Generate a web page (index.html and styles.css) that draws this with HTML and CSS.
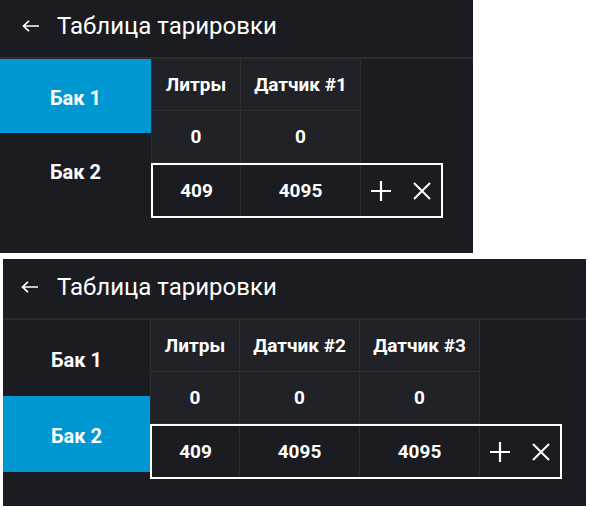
FILE: index.html
```html
<!DOCTYPE html>
<html lang="ru">
<head>
<meta charset="UTF-8">
<meta name="viewport" content="width=device-width, initial-scale=1.0">
<title>Таблица тарировки</title>
<link rel="stylesheet" href="styles.css">
</head>
<body>

<!-- Screen 1: one sensor -->
<div class="screen screen-one">
  <div class="topbar">
    <svg class="back" width="18" height="12" viewBox="0 0 18 12"><path d="M17 6H1.5M7 0.8L1.5 6L7 11.2" fill="none" stroke="#fff" stroke-width="1.7"/></svg>
    <h1>Таблица тарировки</h1>
  </div>
  <div class="content">
    <div class="tanks">
      <div class="tank active">Бак 1</div>
      <div class="tank">Бак 2</div>
    </div>
    <div class="calib">
      <div class="row head">
        <div class="cell c1">Литры</div>
        <div class="cell c2">Датчик #1</div>
      </div>
      <div class="row">
        <div class="cell c1">0</div>
        <div class="cell c2">0</div>
      </div>
      <div class="row edit">
        <div class="cell c1">409</div>
        <div class="cell c2">4095</div>
        <div class="actions">
          <svg width="20" height="20" viewBox="0 0 20 20"><path d="M10 0V20M0 10H20" stroke="#fff" stroke-width="2.2"/></svg>
          <svg width="18" height="18" viewBox="0 0 18 18"><path d="M1 1L17 17M17 1L1 17" stroke="#fff" stroke-width="2"/></svg>
        </div>
      </div>
    </div>
  </div>
</div>

<!-- Screen 2: two sensors -->
<div class="screen screen-two">
  <div class="topbar">
    <svg class="back" width="18" height="12" viewBox="0 0 18 12"><path d="M17 6H1.5M7 0.8L1.5 6L7 11.2" fill="none" stroke="#fff" stroke-width="1.7"/></svg>
    <h1>Таблица тарировки</h1>
  </div>
  <div class="content">
    <div class="tanks">
      <div class="tank">Бак 1</div>
      <div class="tank active">Бак 2</div>
    </div>
    <div class="calib">
      <div class="row head">
        <div class="cell c1">Литры</div>
        <div class="cell c2">Датчик #2</div>
        <div class="cell c2">Датчик #3</div>
      </div>
      <div class="row">
        <div class="cell c1">0</div>
        <div class="cell c2">0</div>
        <div class="cell c2">0</div>
      </div>
      <div class="row edit">
        <div class="cell c1">409</div>
        <div class="cell c2">4095</div>
        <div class="cell c2">4095</div>
        <div class="actions">
          <svg width="20" height="20" viewBox="0 0 20 20"><path d="M10 0V20M0 10H20" stroke="#fff" stroke-width="2.2"/></svg>
          <svg width="18" height="18" viewBox="0 0 18 18"><path d="M1 1L17 17M17 1L1 17" stroke="#fff" stroke-width="2"/></svg>
        </div>
      </div>
    </div>
  </div>
</div>

</body>
</html>
```

FILE: styles.css
```css
body {
  margin: 0;
  background: #fff;
  font-family: Roboto, "Noto Sans", sans-serif;
  color: #fff;
}

.screen {
  background: #1b1c21;
  overflow: hidden;
}
.screen-one {
  width: 473px;
  height: 253px;
}
.screen-two {
  width: 583px;
  height: 247px;
  margin: 6px 0 0 3px;
}

.topbar {
  box-sizing: border-box;
  height: 59px;
  display: flex;
  align-items: center;
  padding: 0 0 5px 22px;
  border-bottom: 2px solid #2b2c31;
}
.screen-two .topbar {
  height: 61px;
  padding: 0 0 4px 18px;
}
.topbar h1 {
  margin: 0 0 0 17px;
  font-size: 24px;
  font-weight: 400;
}
.screen-two .topbar h1 {
  margin-left: 18px;
}

.content {
  display: flex;
}

.tanks {
  width: 151px;
}
.screen-two .tanks {
  width: 147px;
}
.tank {
  box-sizing: border-box;
  height: 74px;
  padding-top: 3px;
  display: flex;
  align-items: center;
  justify-content: center;
  font-size: 20px;
  font-weight: 700;
}
.screen-two .tank {
  height: 76px;
}
.tank.active {
  background: #0098d2;
}

.row {
  display: flex;
  height: 52px;
}
.cell {
  box-sizing: border-box;
  display: flex;
  align-items: center;
  justify-content: center;
  background: #212227;
  border-right: 1px solid #2d2e33;
  border-bottom: 1px solid #2d2e33;
  font-size: 19px;
  font-weight: 700;
}
.row .cell:first-child {
  border-left: 1px solid #2d2e33;
}
.c1 {
  width: 90px;
}
.c2 {
  width: 120px;
}

.row.edit {
  box-sizing: border-box;
  height: 55px;
  width: max-content;
  border: 2px solid #fff;
}
.row.edit .cell {
  background: transparent;
  border-bottom: 0;
}
.row.edit .cell:first-child {
  border-left: 0;
  width: 88px;
}
.actions {
  width: 80px;
  display: flex;
  align-items: center;
  justify-content: center;
  gap: 22px;
}
```
